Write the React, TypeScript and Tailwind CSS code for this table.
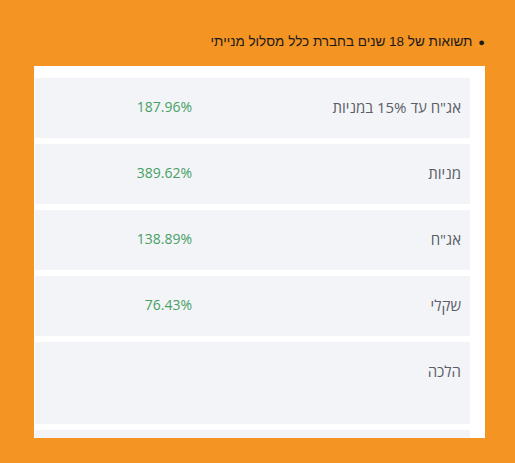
import React from 'react';

const rows = [
  { label: 'אג"ח עד 15% במניות', value: '187.96%' },
  { label: 'מניות', value: '389.62%' },
  { label: 'אג"ח', value: '138.89%' },
  { label: 'שקלי', value: '76.43%' },
  { label: 'הלכה', value: '', tall: true },
  { label: '', value: '' },
];

export default function App() {
  return (
    <div
      dir="rtl"
      className="w-[515px] h-[463px] bg-[#f39423] overflow-hidden font-['Liberation_Sans',sans-serif]"
    >
      <div className="pt-[33px] pr-[30px] flex items-center gap-[6px] text-[13.5px] leading-[18px] text-[#1a1a1a]">
        <span className="text-[11px]">●</span>
        <span>תשואות של 18 שנים בחברת כלל מסלול מנייתי</span>
      </div>
      <div className="mt-[15px] mr-[30px] w-[451px] h-[372px] bg-white overflow-hidden pt-[12px] pl-[1px] pr-[15px]">
        <div className="flex flex-col gap-[6px]">
          {rows.map((r, i) => (
            <div
              key={i}
              className={`flex bg-[#f3f4f8] font-['Open_Sans','DejaVu_Sans',sans-serif] ${r.tall ? 'h-[82px]' : 'h-[60px]'}`}
            >
              <div className="w-[270px] pr-[9px] pt-[19px] text-[15px] leading-[20px] text-[#5a5e66]">
                {r.label}
              </div>
              <div className="pr-[8px] pt-[19px] text-[14px] leading-[20px] text-[#47a064]">
                {r.value}
              </div>
            </div>
          ))}
        </div>
      </div>
    </div>
  );
}
